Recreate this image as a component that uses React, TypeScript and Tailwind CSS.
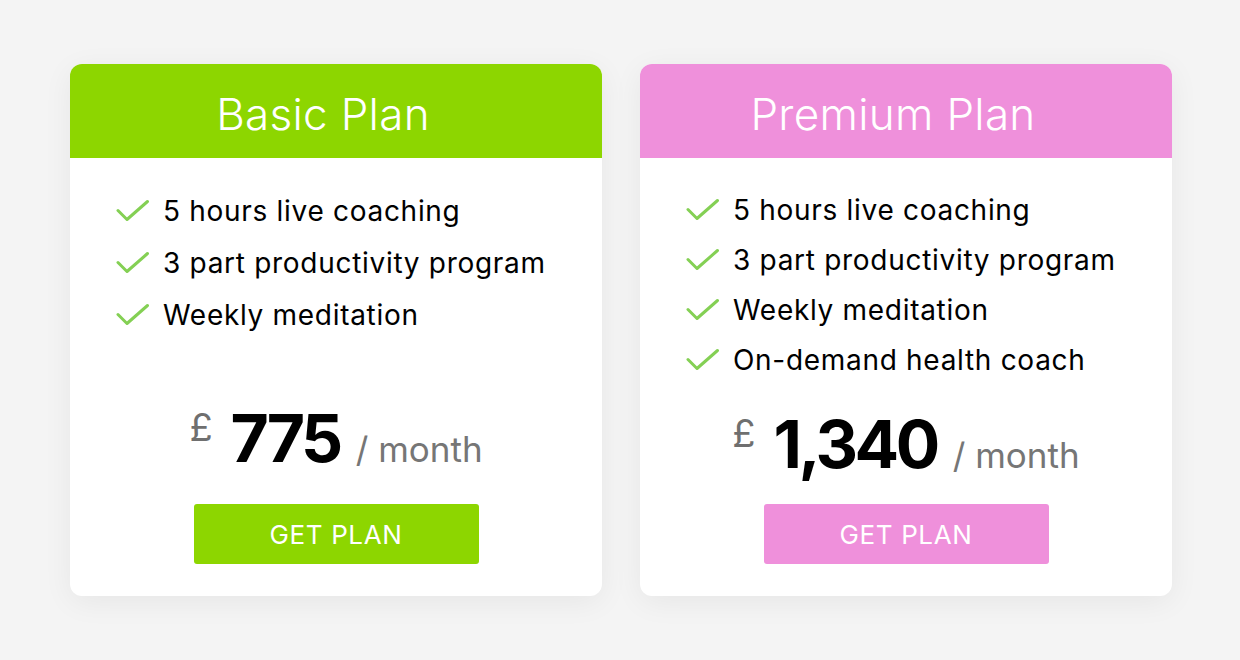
import React from "react";

type Plan = {
  name: string;
  color: string;
  features: string[];
  price: string;
  rowGap: string;
  priceMt: string;
};

const plans: Plan[] = [
  {
    name: "Basic Plan",
    color: "bg-[#8dd600]",
    features: ["5 hours live coaching", "3 part productivity program", "Weekly meditation"],
    price: "775",
    rowGap: "h-[52px]",
    priceMt: "mt-[64px]",
  },
  {
    name: "Premium Plan",
    color: "bg-[#ef90db]",
    features: [
      "5 hours live coaching",
      "3 part productivity program",
      "Weekly meditation",
      "On-demand health coach",
    ],
    price: "1,340",
    rowGap: "h-[50px]",
    priceMt: "mt-[26px]",
  },
];

function Check() {
  return (
    <svg width="34" height="24" viewBox="0 0 34 24" fill="none" className="shrink-0">
      <path
        d="M2 11.5 L11 20.5 L31.5 2.5"
        stroke="#84d054"
        strokeWidth="3"
        strokeLinecap="round"
        strokeLinejoin="round"
      />
    </svg>
  );
}

function PlanCard({ plan }: { plan: Plan }) {
  return (
    <div className="w-[532px] h-[532px] bg-white rounded-[12px] overflow-hidden flex flex-col shadow-[0_6px_30px_rgba(0,0,0,0.06)]">
      <div className={`${plan.color} h-[94px] flex items-center justify-center pt-[6px] pr-[26px]`}>
        <h2 className="text-white text-[44px] font-light tracking-[0.3px] font-['Inter',sans-serif]">
          {plan.name}
        </h2>
      </div>
      <ul className="pl-[46px] pt-[27px] font-['Inter',sans-serif] text-[28px] text-black">
        {plan.features.map((f) => (
          <li key={f} className={`${plan.rowGap} flex items-center gap-[13px]`}>
            <Check />
            <span className="tracking-[0.7px]">{f}</span>
          </li>
        ))}
      </ul>
      <div
        className={`${plan.priceMt} flex items-baseline justify-center font-['Inter',sans-serif]`}
      >
        <span className="text-[#6f6f6f] text-[38px] self-start mt-[-6px] mr-[18px]">£</span>
        <span className="text-black text-[66px] font-bold tracking-[-3.5px] leading-none">
          {plan.price}
        </span>
        <span className="text-[#767676] text-[35px] ml-[16px]">/ month</span>
      </div>
      <div className="mt-auto mb-[32px] flex justify-center">
        <button
          className={`${plan.color} w-[285px] h-[60px] rounded-[3px] text-white text-[26px] tracking-[0.6px] font-['Inter',sans-serif]`}
        >
          GET PLAN
        </button>
      </div>
    </div>
  );
}

export default function App() {
  return (
    <div className="min-h-screen bg-[#f4f4f4] flex gap-[38px] pt-[64px] pl-[70px]">
      {plans.map((p) => (
        <PlanCard key={p.name} plan={p} />
      ))}
    </div>
  );
}
